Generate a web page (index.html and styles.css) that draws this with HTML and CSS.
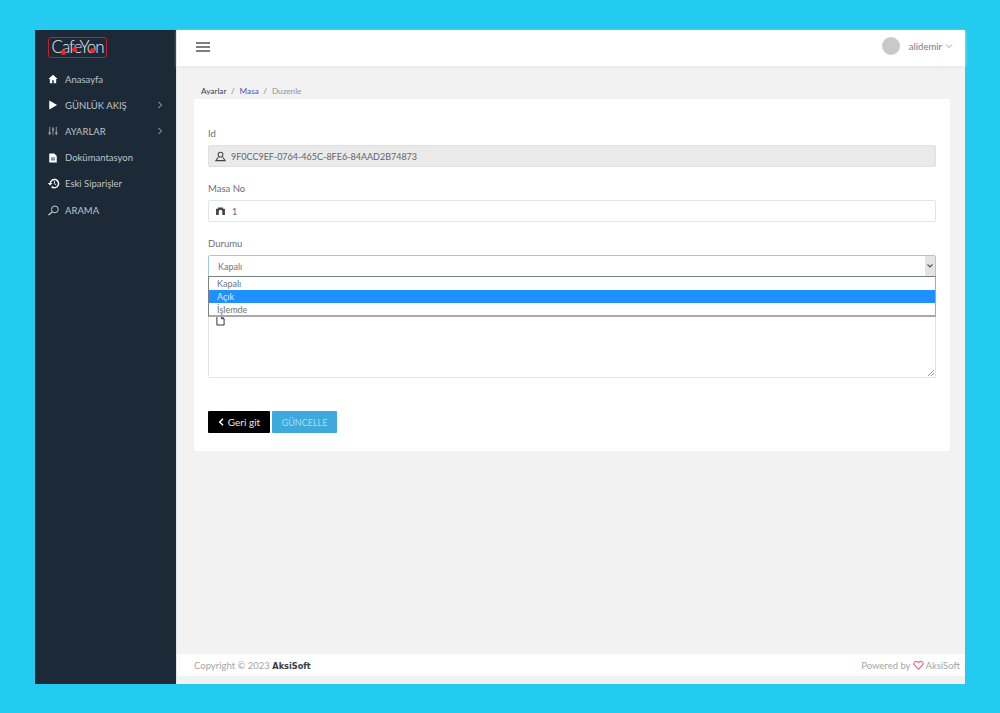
FILE: index.html
```html
<!DOCTYPE html>
<html lang="tr">
<head>
<meta charset="utf-8">
<title>Masa Düzenle</title>
<link rel="stylesheet" href="styles.css">
</head>
<body>
<div class="shell">
  <aside class="sidebar">
    <div class="logo-row"><div class="logo">CafeYon<i class="dot d1"></i><i class="dot d2"></i><i class="dot d3"></i></div></div>
    <nav class="menu">
      <a class="item"><svg class="ico" viewBox="0 0 12 12"><path d="M6 1 .5 6h1.700v5h2.900V7.600h1.800V11h2.900V6h1.700z" fill="#fff"/></svg><span>Anasayfa</span></a>
      <a class="item"><svg class="ico" viewBox="0 0 12 12"><path d="M1.500.5 11 6 1.500 11.500z" fill="#fff"/></svg><span>GÜNLÜK AKIŞ</span><svg class="chev" viewBox="0 0 6 8"><path d="M1.500 1 4.500 4 1.500 7" fill="none" stroke="#aeb6bd"/></svg></a>
      <a class="item"><svg class="ico" viewBox="0 0 12 12"><path d="M2 1v10M6 1v10M10 1v10M.6 7.500h2.800M.6 9h2.800M4.600 3.500h2.800M4.600 5h2.800M8.600 7.500h2.800M8.600 9h2.800" fill="none" stroke="#b9c0c6" stroke-width=".8"/></svg><span>AYARLAR</span><svg class="chev" viewBox="0 0 6 8"><path d="M1.500 1 4.500 4 1.500 7" fill="none" stroke="#aeb6bd"/></svg></a>
      <a class="item"><svg class="ico" viewBox="0 0 12 12"><path d="M1.500 .5h6L10.500 3.500V11.500h-9z" fill="#fff"/><path d="M3.500 6h5M3.500 8.200h5" stroke="#1c2a38"/></svg><span>Dokümantasyon</span></a>
      <a class="item"><svg class="ico wide" viewBox="0 0 14 12"><path d="M3.500 6a4.500 4.500 0 1 1 1.500 3.400" fill="none" stroke="#fff" stroke-width="1.600"/><path d="M.8 5.500h5L3.300 8.200z" fill="#fff"/><path d="M8 3.500V6.300l1.800 1" fill="none" stroke="#fff"/></svg><span>Eski Siparişler</span></a>
      <a class="item"><svg class="ico wide" viewBox="0 0 14 12"><circle cx="8.500" cy="4.800" r="3.700" fill="none" stroke="#d8dcdf"/><path d="M5.800 7.500 1.500 11" stroke="#d8dcdf" stroke-width="1.300"/></svg><span>ARAMA</span></a>
    </nav>
  </aside>
  <div class="main">
    <header class="topbar">
      <svg class="burger" viewBox="0 0 14 10"><path d="M0 1h14M0 5h14M0 9h14" stroke="#555" stroke-width="1.400"/></svg>
      <div class="user"><span class="avatar"></span><span class="uname">alidemir</span><svg class="down" viewBox="0 0 8 6"><path d="M1 1.500 4 4.500 7 1.500" fill="none" stroke="#8a8a8a" stroke-width=".8"/></svg></div>
    </header>
    <main class="content">
      <div class="crumbs"><span class="c1">Ayarlar</span><span class="sep">/</span><span class="c2">Masa</span><span class="sep">/</span><span class="c3">Duzenle</span></div>
      <section class="card">
        <div class="field">
          <label class="label">Id</label>
          <div class="input disabled"><svg class="fi" viewBox="0 0 12 12"><circle cx="6" cy="4" r="2.600" fill="none" stroke="#444" stroke-width="1.100"/><path d="M3.500 6.800 1 10.500h10L8.500 6.800" fill="none" stroke="#444" stroke-width="1.100"/></svg><span>9F0CC9EF-0764-465C-8FE6-84AAD2B74873</span></div>
        </div>
        <div class="field">
          <label class="label">Masa No</label>
          <div class="input"><svg class="fi small" viewBox="0 0 10 9"><path d="M0 2h2.200V.5h5.600V2H10v7H7V5a2 2 0 0 0-4 0v4H0z" fill="#444"/></svg><span>1</span></div>
        </div>
        <div class="field select-field">
          <label class="label">Durumu</label>
          <div class="select"><span>Kapalı</span><span class="arrow"><svg viewBox="0 0 8 6"><path d="M1.500 1.500 4 4 6.500 1.500" fill="none" stroke="#555" stroke-width="1.100"/></svg></span></div>
          <ul class="options"><li>Kapalı</li><li class="active">Açık</li><li>İşlemde</li></ul>
        </div>
        <div class="note">
          <svg class="doc" viewBox="0 0 10 12"><path d="M1 1h5l3 3v7H1z M6 1v3h3" fill="#fff" stroke="#333" stroke-width="1.100"/></svg>
          <svg class="grip" viewBox="0 0 8 8"><path d="M7 1 1 7M7 4 4 7" stroke="#888" stroke-width=".9"/></svg>
        </div>
        <div class="actions">
          <button class="btn back"><svg class="bk" viewBox="0 0 6 8"><path d="M5 .8 1.700 4 5 7.200" fill="none" stroke="#fff" stroke-width="1.500"/></svg>Geri git</button>
          <button class="btn save">GÜNCELLE</button>
        </div>
      </section>
    </main>
    <footer class="footer">
      <div class="copy">Copyright © 2023 <b>AksiSoft</b></div>
      <div class="power">Powered by <svg class="heart" viewBox="0 0 12 11"><path d="M6 10 1.500 5.500C-.5 3 2.800-.2 6 2.700 9.200-.2 12.500 3 10.500 5.500z" fill="none" stroke="#e56f97" stroke-width="1.300"/></svg> AksiSoft</div>
    </footer>
    <div class="tail"></div>
  </div>
</div>
</body>
</html>
```
FILE: styles.css
```css
* { box-sizing: border-box; }
html, body { margin: 0; height: 100%; }
body {
  background: #22cbef;
  padding: 30px 35px 29px;
  font-family: "Lato", "Liberation Sans", sans-serif;
  font-size: 9.5px;
  color: #6f7479;
}
.shell { display: flex; height: 654px; }
.sidebar { width: 141px; flex: none; background: #1c2a38; }
.logo-row { height: 36px; padding: 7px 0 0 13px; }
.logo {
  position: relative;
  width: 59px; height: 21px;
  border: 1px solid #c0202b;
  border-radius: 3px;
  color: #e8edf0;
  font-size: 17px;
  font-weight: 300;
  line-height: 18px;
  text-align: center;
  letter-spacing: -1px;
  white-space: nowrap;
}
.dot { position: absolute; width: 5px; height: 5px; border-radius: 50%; background: #f0222c; }
.d1 { left: 12px; top: 12px; }
.d2 { left: 23px; top: 9px; }
.d3 { left: 41px; top: 10px; }
.menu { display: flex; flex-direction: column; }
.item {
  display: flex; align-items: center;
  height: 26.200px;
  padding: 0 13px;
  color: #bcc3c9;
  font-size: 9.5px;
  white-space: nowrap;
}
.ico { width: 10px; height: 10px; flex: none; margin-right: 7px; }
.ico.wide { width: 13px; height: 11px; margin-left: -1px; margin-right: 5px; }
.chev { width: 6px; height: 8px; margin-left: auto; }
.main { flex: 1; min-width: 0; display: flex; flex-direction: column; background: #f2f2f2; border-left: 1px solid #e3e6e8; }
.topbar {
  height: 36px; flex: none;
  background: #fff;
  box-shadow: 0 1px 3px #e4e4e4;
  display: flex; align-items: center; justify-content: space-between;
  padding: 0 12px 2px 19px;
}
.burger { width: 14px; height: 10px; }
.user { display: flex; align-items: center; margin-bottom: 2px; }
.avatar { width: 18px; height: 18px; border-radius: 50%; background: #c9c9c9; margin-right: 9px; }
.uname { color: #7b7b7b; font-size: 9.500px; margin-right: 3px; }
.down { width: 8px; height: 6px; }
.content { flex: 1; padding: 18px 15px 0 17px; }
.crumbs { display: flex; height: 15px; align-items: center; font-size: 8.200px; padding: 0 0 2px 7px; }
.c1 { color: #3d4146; }
.c2 { color: #5a50bd; }
.c3 { color: #8d9296; }
.sep { margin: 0 5px 0 4.500px; color: #777; }
.card { background: #fff; height: 352px; padding: 30px 14px 0; border-radius: 2px; }
.field { margin-bottom: 17px; }
.label { display: block; height: 16px; line-height: 10px; color: #6a6f74; font-size: 9.500px; }
.input {
  height: 22px;
  border: 1px solid #e2e5e8;
  border-radius: 2px;
  background: #fff;
  display: flex; align-items: center;
  padding-left: 6px;
  color: #5f6469;
  font-size: 9px;
}
.input.disabled { background: #eaeaea; border-color: #e0e0e0; }
.fi { width: 11px; height: 11px; margin-right: 5px; }
.fi.small { width: 9px; height: 8px; margin-left: 1px; margin-right: 7px; }
.select-field { position: relative; margin-bottom: 0; }
.select {
  height: 22px;
  border: 1px solid #9cc8ea;
  border-radius: 2px 2px 0 0;
  display: flex; align-items: center; justify-content: space-between;
  padding-left: 9px;
  color: #6f7479;
  font-size: 9px;
}
.arrow { width: 10px; height: 20px; background: #e4e4e4; display: flex; align-items: center; }
.arrow svg { width: 8px; height: 6px; margin: 0 1px; }
.options {
  position: absolute; left: 0; right: 0; top: 37px;
  margin: 0; padding: 0; list-style: none;
  background: #fff;
  border: 1px solid #7b8087;
  border-bottom: 2px solid #a9a9a9;
  border-right-color: #a9a9a9;
  z-index: 2;
  height: 41px;
}
.options li { height: 13px; line-height: 13px; padding-left: 8px; color: #6f7479; font-size: 9px; }
.options li.active { background: #1e90ff; color: #dcecff; }
.note {
  position: relative;
  height: 101px;
  border: 1px solid #e2e5e8;
  border-top: 0;
  border-radius: 0 0 2px 2px;
  padding: 38px 0 0 7px;
}
.doc { display: block; width: 9px; height: 11px; }
.grip { position: absolute; right: 0; bottom: 0; width: 8px; height: 8px; }
.actions { display: flex; gap: 2px; margin-top: 33px; }
.btn {
  height: 22px; border: 0; border-radius: 1px;
  font-family: inherit; font-size: 9px;
  display: flex; align-items: center; justify-content: center;
  padding: 0;
}
.back { width: 62px; background: #000; color: #e8e8e8; font-size: 10px; }
.bk { width: 6px; height: 8px; margin-right: 4px; }
.save { width: 65px; background: #3ea9dc; color: #a9dcf2; }
.footer {
  height: 22px; flex: none;
  background: #fff;
  display: flex; align-items: center; justify-content: space-between;
  padding: 0 5px 0 17px;
  color: #a3a6a9;
}
.copy b { color: #3a3d40; font-family: "DejaVu Sans", sans-serif; font-size: 8.200px; font-weight: 700; }
.power { display: flex; align-items: center; gap: 2px; }
.heart { width: 11px; height: 10px; }
.tail { height: 8px; flex: none; background: #f2f2f2; }
```
